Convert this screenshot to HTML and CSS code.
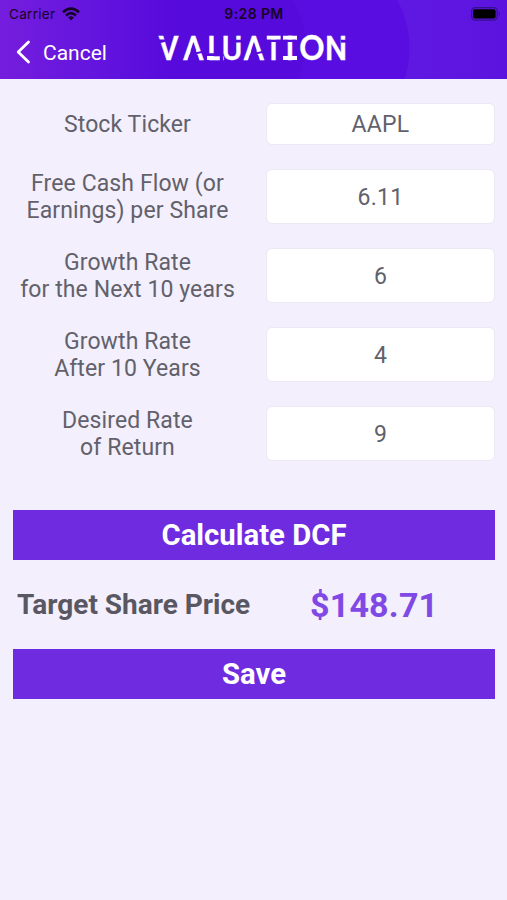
FILE: index.html
```html
<!DOCTYPE html>
<html lang="en">
<head>
    <meta charset="utf-8">
    <title>Valuation</title>
    <link rel="stylesheet" href="styles.css">
</head>
<body>
    <header class="header">
        <div class="status">
            <div class="carrier">
                <span>Carrier</span>
                <svg width="18" height="14" viewBox="0 0 18 14" fill="none" stroke="#160527" stroke-width="2.6">
                    <path d="M1 5.2 Q9 -1.9 17 5.2"/>
                    <path d="M4 8.4 Q9 4 14 8.4"/>
                    <path d="M6.2 10.4 Q9 8.2 11.8 10.4 L9 13.4Z" fill="#160527" stroke="none"/>
                </svg>
            </div>
            <div class="time">9:28 PM</div>
            <svg class="battery" width="30" height="14" viewBox="0 0 30 14">
                <rect x="0.6" y="0.6" width="25.6" height="12.6" rx="3.6" fill="none" stroke="#35108c" stroke-width="1.2"/>
                <rect x="2" y="2.2" width="22.6" height="9.4" rx="2" fill="#000"/>
                <path d="M27.8 4.6 Q30 7 27.8 9.2Z" fill="#35108c"/>
            </svg>
        </div>
        <div class="nav">
            <a class="cancel">
                <svg width="15" height="24" viewBox="0 0 15 24" fill="none" stroke="#fff" stroke-width="2.8" stroke-linecap="round" stroke-linejoin="round">
                    <path d="M12.5 2 L2.2 12 L12.5 22"/>
                </svg>
                <span>Cancel</span>
            </a>
            <svg class="logo" width="192" height="30" viewBox="0 0 192 30">
                <text class="logo-text" transform="scale(0.92 1)" y="26" x="0.5 27.2 53.6 69.3 93 115.2 138.6 153.4 181.5">VALUATI<tspan class="round">O</tspan>N</text>
                <!-- bars of the I, foot of the L -->
                <path class="bar" d="M125 1.8h14v4h-14zM125 22h14v4h-14zM49 22h4v4h-4z"/>
                <!-- cuts in the letters -->
                <path class="cut" d="M0 5.5 L9 5.5 L9 7.5 L0 9.5Z"/>
                <path class="cut" d="M35.4 9 L41.2 26.5 L29.6 26.5Z M37 18.5 L46 16.5 L46 18.5 L37 20.5Z"/>
                <path class="cut" d="M95.9 9 L101.7 26.5 L90.1 26.5Z M97.5 18.5 L106.5 16.5 L106.5 18.5 L97.5 20.5Z"/>
                <path class="cut" d="M49 19.2h13v2.8h-13zM61.8 21h3.4v6h-3.4z"/>
                <path class="cut" d="M76.5 5.8h8v2.8h-8zM105.5 1h3.3v6h-3.3zM122.6 1h2.4v6h-2.4zM108 5.8h16v2.2h-16zM126 5.8h12v2.2h-12z"/>
                <path class="cut" d="M183 5.8h7v2.8h-7z"/>
            </svg>
        </div>
    </header>

    <main class="content">
        <form class="form">
            <label for="ticker">Stock Ticker</label>
            <input type="text" id="ticker" class="short" value="AAPL">

            <label for="cash">Free Cash Flow (or<br>Earnings) per Share</label>
            <input type="text" id="cash" value="6.11">

            <label for="growth">Growth Rate<br>for the Next 10 years</label>
            <input type="text" id="growth" value="6">

            <label for="after">Growth Rate<br>After 10 Years</label>
            <input type="text" id="after" value="4">

            <label for="rate">Desired Rate<br>of Return</label>
            <input type="text" id="rate" value="9">
        </form>

        <button type="button">Calculate DCF</button>
        <div class="result">
            <span class="result-label">Target Share Price</span>
            <span class="price">$148.71</span>
        </div>
        <button type="button">Save</button>
    </main>
</body>
</html>
```

FILE: styles.css
```css
* { box-sizing: border-box; }
body { margin: 0; min-height: 900px; background: #f3effc; font-family: Roboto, sans-serif; color: #62616b; }

.header {
    height: 79px;
    background:
        radial-gradient(circle at 0 45px, #570adc 0 85px, transparent 86px) 220px 0 / 90px 79px no-repeat,
        radial-gradient(circle at 0 48px, #590de0 0 99px, transparent 100px) 310px 0 / 110px 79px no-repeat,
        linear-gradient(90deg, #751ddd 0, #6415de 90px, #570adc 170px, #570adc 220px, #590de0 221px, #590de0 310px, #5f18e1 311px, #5f18e1 420px, #5c13df 507px);
}
.status { display: grid; grid-template-columns: 1fr auto 1fr; align-items: center; height: 27px; padding: 0 6px 0 7px; color: #160527; font-family: Inter, sans-serif; font-size: 13.5px; }
.carrier { display: flex; align-items: center; gap: 7px; padding-left: 2px; letter-spacing: 0.3px; }
.time { font-weight: 600; font-size: 14px; letter-spacing: 0.4px; }
.battery { justify-self: end; }

.nav { display: flex; align-items: center; height: 50px; padding-left: 16px; }
.cancel { display: flex; align-items: center; gap: 12px; width: 142px; color: #fff; font-size: 21px; }
.cancel span { padding-top: 1px; }
.logo { margin-top: -6px; overflow: visible; }
.logo-text { fill: #fff; stroke: #fff; stroke-width: 0.4px; font-family: Roboto, sans-serif; font-size: 34px; font-weight: 500; }
.round { font-family: Lato, sans-serif; font-weight: 700; }
.bar { fill: #fff; }
.cut { fill: #570adc; }

.content { padding: 24px 12px 0 13px; }
.form { display: grid; grid-template-columns: 229px 229px; justify-content: space-between; row-gap: 24px; align-items: center; margin-bottom: 49px; }
label { padding-top: 1px; font-size: 23px; line-height: 27px; letter-spacing: 0.1px; text-align: center; }
input { width: 100%; height: 55px; padding: 2px 0 0; border: 1px solid #ece8f4; border-radius: 6px; background: #fff; color: #62616b; font-family: Roboto, sans-serif; font-size: 23px; letter-spacing: 0.3px; text-align: center; }
.short { height: 42px; padding: 0; }

button { display: block; width: 100%; height: 50px; padding: 0; border: none; background: #6e2be0; color: #fff; font-family: Roboto, sans-serif; font-size: 29.3px; font-weight: 700; }
.result { display: flex; align-items: center; height: 89px; padding-left: 4px; }
.result-label { width: 293px; font-size: 28px; font-weight: 700; color: #595762; }
.price { font-size: 34px; font-weight: 700; letter-spacing: 0.2px; color: #8048e4; }
```
